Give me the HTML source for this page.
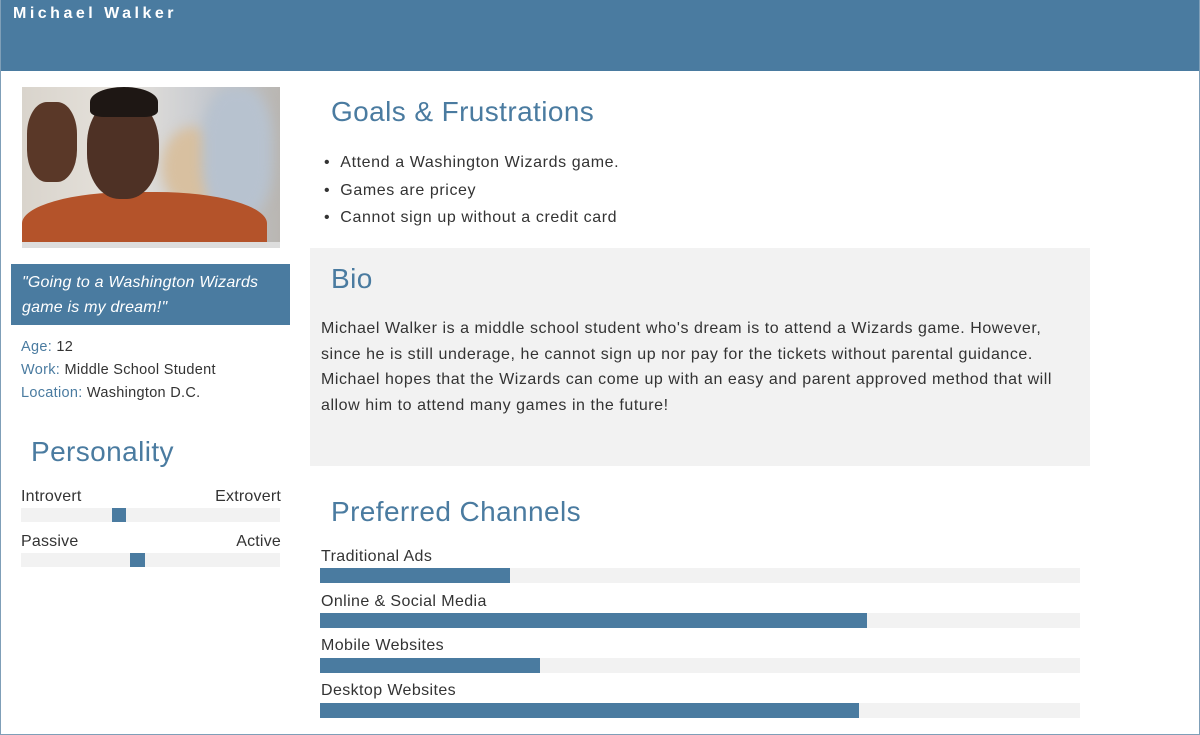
<!DOCTYPE html>
<html><head><style>
*{margin:0;padding:0;box-sizing:border-box}
body{width:1200px;height:735px;overflow:hidden;background:#fff;font-family:"Liberation Sans",sans-serif;color:#333;position:relative}
.frame{position:absolute;left:0;top:0;width:1200px;height:735px;border:1px solid #7f9fb8;border-top:none}
.hdr{position:absolute;left:0;top:0;width:1200px;height:71px;background:#4a7ba0}
.hdr span{position:absolute;left:13px;top:5px;color:#fff;font-weight:bold;font-size:16px;letter-spacing:3.5px}
.a{position:absolute;white-space:nowrap}
.h{color:#4a7ba0;font-size:28px;font-weight:normal;letter-spacing:0.4px}
.t{font-size:16px;color:#333;letter-spacing:0.4px}
.bar{position:absolute;background:#f2f2f2}
.fill{position:absolute;left:0;top:0;height:100%;background:#4a7ba0}
.photo{position:absolute;left:22px;top:87px;width:258px;height:161px;overflow:hidden;background:linear-gradient(90deg,#d9d4cc,#e6e2dc 40%,#c8cbd0 70%,#b9b6b2)}
</style></head><body>
<div class="hdr"><span>Michael Walker</span></div>
<div class="photo">
<div style="position:absolute;left:140px;top:40px;width:60px;height:80px;border-radius:50%;background:#d8c0a0;filter:blur(6px)"></div>
<div style="position:absolute;left:180px;top:0;width:70px;height:130px;border-radius:40%;background:#b7c2cf;filter:blur(6px)"></div>
<div style="position:absolute;left:0;top:105px;width:245px;height:70px;border-radius:45% 45% 0 0;background:#b4532a"></div>
<div style="position:absolute;left:65px;top:12px;width:72px;height:100px;border-radius:45%;background:#4e3125"></div>
<div style="position:absolute;left:68px;top:0;width:68px;height:30px;border-radius:50% 50% 20% 20%;background:#1e1714"></div>
<div style="position:absolute;left:5px;top:15px;width:50px;height:80px;border-radius:40%;background:#5a3828"></div>
<div style="position:absolute;left:0;top:155px;width:258px;height:6px;background:#ddd"></div>
</div>
<div class="a" style="left:11px;top:264px;width:279px;height:61px;background:#4a7ba0;color:#fff;font-style:italic;font-size:16px;letter-spacing:0.2px;line-height:25px;padding:6px 11px;white-space:normal">"Going to a Washington Wizards game is my dream!"</div>
<div class="a t" style="left:21px;top:336px;font-size:14.5px;letter-spacing:0.3px;line-height:23px"><span style="color:#4a7ba0">Age:</span> 12<br><span style="color:#4a7ba0">Work:</span> Middle School Student<br><span style="color:#4a7ba0">Location:</span> Washington D.C.</div>
<div class="a h" style="left:31px;top:436px">Personality</div>
<div class="a t" style="left:21px;top:488px;letter-spacing:0.2px">Introvert</div>
<div class="a t" style="right:919px;top:488px;letter-spacing:0.2px">Extrovert</div>
<div class="bar" style="left:21px;top:508px;width:259px;height:14px"><div class="fill" style="left:91px;width:14px"></div></div>
<div class="a t" style="left:21px;top:533px;letter-spacing:0.2px">Passive</div>
<div class="a t" style="right:919px;top:533px;letter-spacing:0.2px">Active</div>
<div class="bar" style="left:21px;top:553px;width:259px;height:14px"><div class="fill" style="left:109px;width:15px"></div></div>

<div class="a h" style="left:331px;top:96px">Goals &amp; Frustrations</div>
<div class="a t" style="left:324px;top:149px;line-height:27.5px;letter-spacing:0.6px">•&nbsp;&nbsp;Attend a Washington Wizards game.<br>•&nbsp;&nbsp;Games are pricey<br>•&nbsp;&nbsp;Cannot sign up without a credit card</div>
<div class="a" style="left:310px;top:248px;width:780px;height:218px;background:#f2f2f2"></div>
<div class="a h" style="left:331px;top:263px">Bio</div>
<div class="a t" style="left:321px;top:316px;font-size:16px;letter-spacing:0.55px;line-height:25.5px">Michael Walker is a middle school student who's dream is to attend a Wizards game. However,<br>since he is still underage, he cannot sign up nor pay for the tickets without parental guidance.<br>Michael hopes that the Wizards can come up with an easy and parent approved method that will<br>allow him to attend many games in the future!</div>
<div class="a h" style="left:331px;top:496px">Preferred Channels</div>
<div class="a t" style="left:321px;top:548px">Traditional Ads</div>
<div class="bar" style="left:320px;top:568px;width:760px;height:15px"><div class="fill" style="width:190px"></div></div>
<div class="a t" style="left:321px;top:593px">Online &amp; Social Media</div>
<div class="bar" style="left:320px;top:613px;width:760px;height:15px"><div class="fill" style="width:547px"></div></div>
<div class="a t" style="left:321px;top:637px">Mobile Websites</div>
<div class="bar" style="left:320px;top:658px;width:760px;height:15px"><div class="fill" style="width:220px"></div></div>
<div class="a t" style="left:321px;top:682px">Desktop Websites</div>
<div class="bar" style="left:320px;top:703px;width:760px;height:15px"><div class="fill" style="width:539px"></div></div>
<div class="frame"></div>
</body></html>
